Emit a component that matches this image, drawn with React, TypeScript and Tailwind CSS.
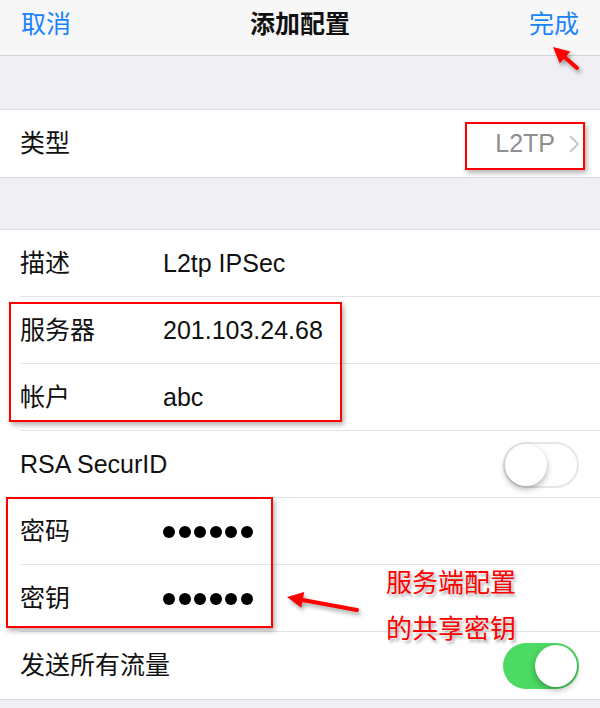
import React from 'react';

const font = "font-['Liberation_Sans','Noto_Sans_CJK_SC',sans-serif]";

function Row({ label, children, last }: { label: string; children?: React.ReactNode; last?: boolean }) {
  return (
    <div className="relative flex h-[67px] items-center pl-[20px] pr-[21px]">
      <div className="min-w-[143px] shrink-0 whitespace-nowrap text-[25px] text-[#111]">{label}</div>
      <div className="flex flex-1 items-center whitespace-nowrap text-[25px] text-[#111]">{children}</div>
      {!last && <div className="absolute bottom-0 left-[20px] right-0 h-px bg-[#e3e3e6]" />}
    </div>
  );
}

function Toggle({ on }: { on?: boolean }) {
  return (
    <div
      className={
        on
          ? 'ml-auto flex h-[46px] w-[76px] items-center justify-end rounded-full bg-[#4cd964] p-[2px]'
          : 'ml-auto flex h-[46px] w-[76px] items-center rounded-full border-2 border-[#e6e6e6] bg-white'
      }
    >
      <div className="h-[42px] w-[42px] rounded-full bg-white shadow-[0_3px_6px_rgba(0,0,0,0.3)]" />
    </div>
  );
}

function Dots() {
  return (
    <div className="flex gap-[3.6px]">
      {[0, 1, 2, 3, 4, 5].map((i) => (
        <div key={i} className="h-[12px] w-[12px] rounded-full bg-black" />
      ))}
    </div>
  );
}

function Arrow({ x1, y1, x2, y2 }: { x1: number; y1: number; x2: number; y2: number }) {
  const a = Math.atan2(y2 - y1, x2 - x1);
  const len = 16;
  const w = 8;
  const bx = x2 - Math.cos(a) * len;
  const by = y2 - Math.sin(a) * len;
  const px = -Math.sin(a) * w;
  const py = Math.cos(a) * w;
  return (
    <g>
      <line x1={x1} y1={y1} x2={bx} y2={by} stroke="#f00" strokeWidth={4} strokeLinecap="round" />
      <polygon points={`${x2},${y2} ${bx + px},${by + py} ${bx - px},${by - py}`} fill="#f00" />
    </g>
  );
}

export default function App() {
  return (
    <div className={`relative h-[708px] w-[600px] overflow-hidden bg-[#efeff4] ${font}`}>
      {/* nav bar */}
      <div className="flex h-[56px] items-center justify-between border-b border-[#d4d4d8] bg-[#f7f7f8] px-[21px] pb-[6px]">
        <span className="text-[25px] text-[#1a84fb]">取消</span>
        <span className="text-[25px] font-bold text-[#111]">添加配置</span>
        <span className="text-[25px] text-[#1a84fb]">完成</span>
      </div>

      <div className="h-[53px]" />

      <div className="border-y border-[#dcdce0] bg-white">
        <Row label="类型" last>
          <div className="ml-auto flex items-center gap-[14px] text-[#8e8e93]">
            <span>L2TP</span>
            <svg width="10" height="18" viewBox="0 0 10 18">
              <path d="M1 1l8 8-8 8" fill="none" stroke="#c7c7cc" strokeWidth="2" />
            </svg>
          </div>
        </Row>
      </div>

      <div className="h-[51px]" />

      <div className="border-y border-[#dcdce0] bg-white">
        <Row label="描述">L2tp IPSec</Row>
        <Row label="服务器">201.103.24.68</Row>
        <Row label="帐户">abc</Row>
        <Row label="RSA SecurID">
          <Toggle />
        </Row>
        <Row label="密码">
          <Dots />
        </Row>
        <Row label="密钥">
          <Dots />
        </Row>
        <Row label="发送所有流量" last>
          <Toggle on />
        </Row>
      </div>

      {/* annotations */}
      <div className="absolute left-[465px] top-[122px] h-[48px] w-[120px] border-2 border-[#f00] shadow-[2px_3px_5px_rgba(0,0,0,0.3)]" />
      <div className="absolute left-[9px] top-[302px] h-[120px] w-[333px] border-2 border-[#f00] shadow-[2px_3px_5px_rgba(0,0,0,0.3)]" />
      <div className="absolute left-[6px] top-[497px] h-[131px] w-[267px] border-2 border-[#f00] shadow-[2px_3px_5px_rgba(0,0,0,0.3)]" />

      <div className="absolute left-[386px] top-[560px] text-[26px] leading-[46px] text-[#f00] [text-shadow:2px_3px_3px_rgba(0,0,0,0.3)]">
        <div>服务端配置</div>
        <div>的共享密钥</div>
      </div>

      <svg className="absolute left-0 top-0" width="600" height="708" style={{ filter: 'drop-shadow(2px 3px 2px rgba(0,0,0,0.35))' }}>
        <Arrow x1={577} y1={68} x2={553} y2={47} />
        <Arrow x1={357} y1={610} x2={287} y2={597} />
      </svg>
    </div>
  );
}
